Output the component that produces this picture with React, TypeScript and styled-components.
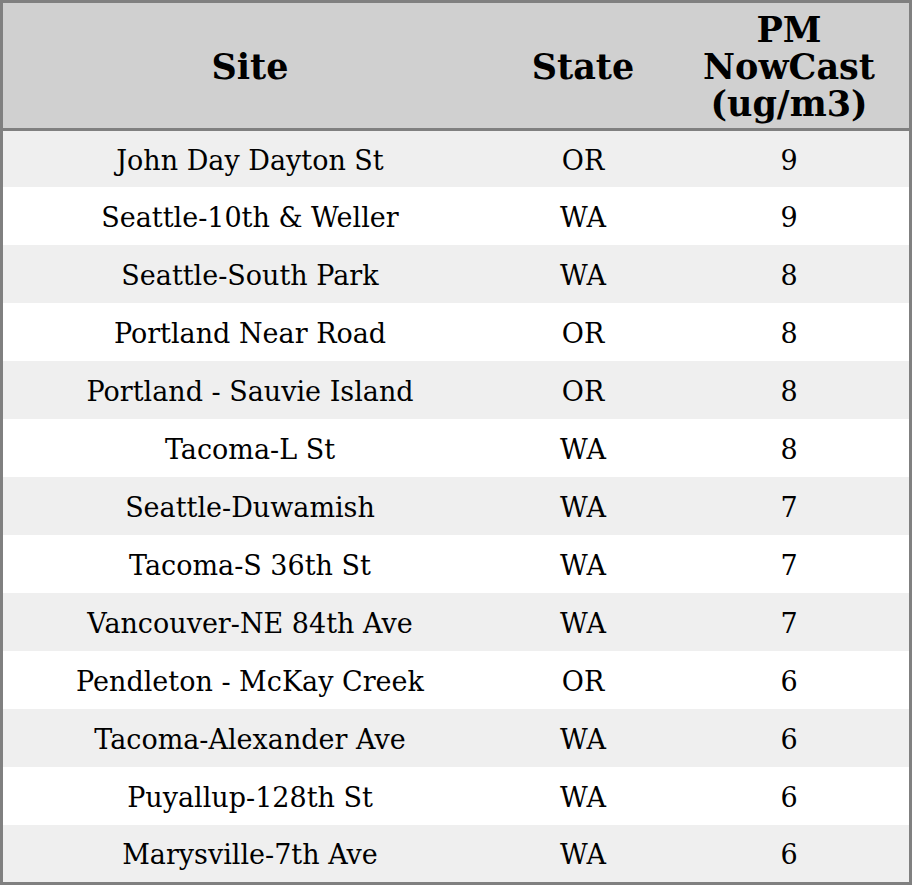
import { createGlobalStyle } from 'styled-components';
import styled from 'styled-components';

type Reading = {
  site: string;
  state: string;
  pm: number;
};

const readings: Reading[] = [
  { site: 'John Day Dayton St', state: 'OR', pm: 9 },
  { site: 'Seattle-10th & Weller', state: 'WA', pm: 9 },
  { site: 'Seattle-South Park', state: 'WA', pm: 8 },
  { site: 'Portland Near Road', state: 'OR', pm: 8 },
  { site: 'Portland - Sauvie Island', state: 'OR', pm: 8 },
  { site: 'Tacoma-L St', state: 'WA', pm: 8 },
  { site: 'Seattle-Duwamish', state: 'WA', pm: 7 },
  { site: 'Tacoma-S 36th St', state: 'WA', pm: 7 },
  { site: 'Vancouver-NE 84th Ave', state: 'WA', pm: 7 },
  { site: 'Pendleton - McKay Creek', state: 'OR', pm: 6 },
  { site: 'Tacoma-Alexander Ave', state: 'WA', pm: 6 },
  { site: 'Puyallup-128th St', state: 'WA', pm: 6 },
  { site: 'Marysville-7th Ave', state: 'WA', pm: 6 },
];

const GlobalStyle = createGlobalStyle`
  html, body {
    margin: 0;
    padding: 0;
    background: #ffffff;
  }
  body {
    font-family: "DejaVu Serif", serif;
    color: #000000;
  }
`;

const Table = styled.div`
  width: 912px;
  height: 885px;
  box-sizing: border-box;
  border: 3px solid #808080;
  display: flex;
  flex-direction: column;
`;

const Columns = `
  display: grid;
  grid-template-columns: 494px 172px 240px;
`;

const HeaderRow = styled.div`
  ${Columns}
  height: 125px;
  background: #d0d0d0;
  border-bottom: 3px solid #808080;
`;

const HeaderCell = styled.div`
  display: flex;
  align-items: center;
  justify-content: center;
  text-align: center;
  font-size: 35px;
  font-weight: bold;
  line-height: 37px;
  padding-top: 2px;
`;

const Row = styled.div<{ $striped: boolean }>`
  ${Columns}
  height: 58px;
  background: ${p => (p.$striped ? '#efefef' : '#ffffff')};
  &:first-of-type {
    height: 56px;
  }
  &:last-of-type {
    height: 57px;
  }
`;

const Body = styled.div`
  display: flex;
  flex-direction: column;
`;

const Cell = styled.div`
  display: flex;
  align-items: center;
  justify-content: center;
  font-size: 27px;
  padding-top: 2px;
`;

const App = () => {
  return (
    <>
      <GlobalStyle />
      <Table>
        <HeaderRow>
          <HeaderCell>Site</HeaderCell>
          <HeaderCell>State</HeaderCell>
          <HeaderCell>
            PM
            <br />
            NowCast
            <br />
            (ug/m3)
          </HeaderCell>
        </HeaderRow>
        <Body>
          {readings.map((r, i) => (
            <Row key={r.site} $striped={i % 2 === 0}>
              <Cell>{r.site}</Cell>
              <Cell>{r.state}</Cell>
              <Cell>{r.pm}</Cell>
            </Row>
          ))}
        </Body>
      </Table>
    </>
  );
};

export default App;
